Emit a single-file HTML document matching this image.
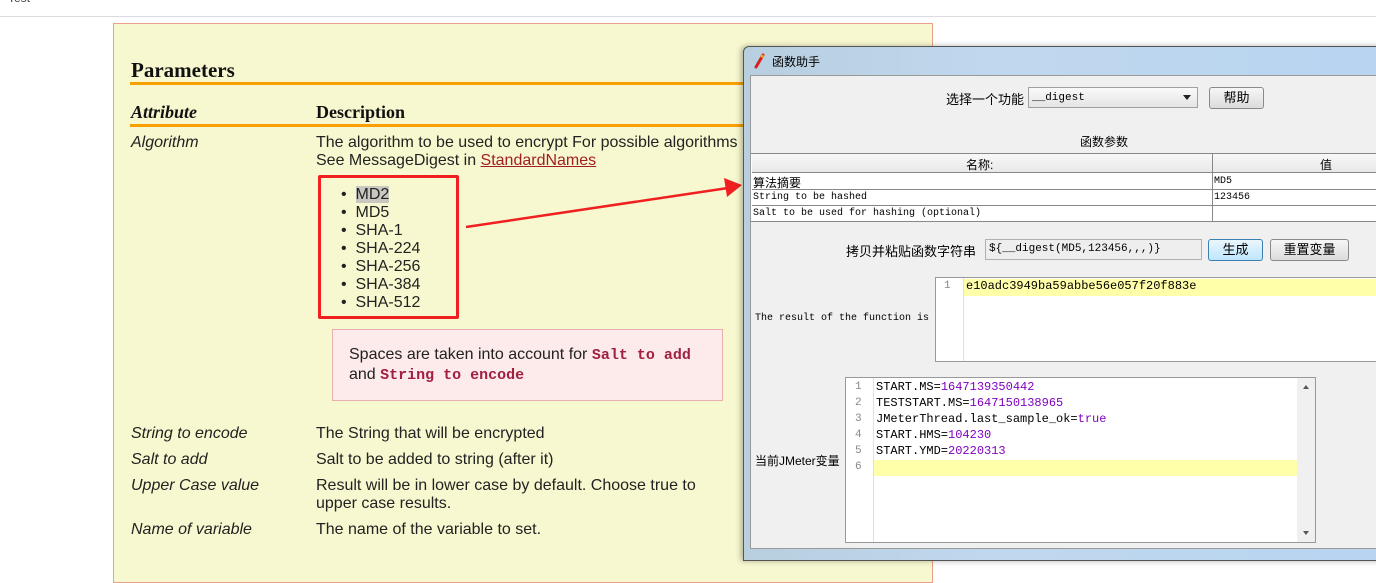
<!DOCTYPE html>
<html><head><meta charset="utf-8"><style>
*{margin:0;padding:0;box-sizing:border-box}
body{width:1376px;height:555px;overflow:hidden;background:#fff;position:relative;font-family:"Liberation Sans","Noto Sans CJK SC",sans-serif}
.a{position:absolute;white-space:nowrap}
.s{font-family:"Liberation Sans",sans-serif;font-size:16px;color:#222}
.i{font-style:italic}
.cjk{font-family:"Liberation Sans","Noto Sans CJK SC",sans-serif;font-size:12px;color:#000}
.mono{font-family:"Liberation Mono","Noto Sans CJK SC",monospace;font-size:11px;color:#000}
.sm{font-family:"Liberation Mono",monospace;font-size:10px;color:#000}
.btn{position:absolute;border:1px solid #8a8a8a;border-radius:3px;background:linear-gradient(#f6f6f6,#dcdcdc);font-size:13px;text-align:center;font-family:"Liberation Sans","Noto Sans CJK SC",sans-serif}
.num{color:#8000c0}
</style></head><body>
<div class="a" style="left:8px;top:-9px;font-size:12px;color:#444">Test</div>
<div class="a" style="left:0;top:16px;width:1376px;height:1px;background:#dcdce0"></div>
<div class="a" style="left:113px;top:23px;width:820px;height:560px;background:#f8f8d0;border:1px solid #e8a088"></div>
<div class="a" style="left:131px;top:58px;font-family:'Liberation Serif',serif;font-weight:bold;font-size:21px;color:#111">Parameters</div>
<div class="a" style="left:130px;top:82px;width:620px;height:3px;background:#f8a000"></div>
<div class="a" style="left:131px;top:102px;font-family:'Liberation Serif',serif;font-weight:bold;font-style:italic;font-size:18px;color:#111">Attribute</div>
<div class="a" style="left:316px;top:102px;font-family:'Liberation Serif',serif;font-weight:bold;font-size:18px;color:#111">Description</div>
<div class="a" style="left:130px;top:124px;width:620px;height:3px;background:#f8a000"></div>
<div class="a s i" style="left:131px;top:134px">Algorithm</div>
<div class="a s" style="left:316px;top:134px">The algorithm to be used to encrypt For possible algorithms</div>
<div class="a s" style="left:316px;top:152px">See MessageDigest in <span style="color:#a02020;text-decoration:underline">StandardNames</span></div>
<div class="a" style="left:318px;top:175px;width:141px;height:144px;border:3px solid #f02020;border-radius:2px"></div>
<div class="a s" style="left:341px;top:186px;line-height:18px">
• &nbsp;<span style="background:#c8c8c0">MD2</span><br>• &nbsp;MD5<br>• &nbsp;SHA-1<br>• &nbsp;SHA-224<br>• &nbsp;SHA-256<br>• &nbsp;SHA-384<br>• &nbsp;SHA-512</div>
<div class="a" style="left:332px;top:329px;width:391px;height:72px;background:#fdeaea;border:1px solid #e8b0b0"></div>
<div class="a s" style="left:349px;top:346px">Spaces are taken into account for <span style="font-family:'Liberation Mono',monospace;font-weight:bold;color:#a02040;font-size:15px">Salt to add</span></div>
<div class="a s" style="left:349px;top:366px">and <span style="font-family:'Liberation Mono',monospace;font-weight:bold;color:#a02040;font-size:15px">String to encode</span></div>
<div class="a s i" style="left:131px;top:425px">String to encode</div>
<div class="a s" style="left:316px;top:425px">The String that will be encrypted</div>
<div class="a s i" style="left:131px;top:451px">Salt to add</div>
<div class="a s" style="left:316px;top:451px">Salt to be added to string (after it)</div>
<div class="a s i" style="left:131px;top:477px">Upper Case value</div>
<div class="a s" style="left:316px;top:477px">Result will be in lower case by default. Choose true to</div>
<div class="a s" style="left:316px;top:495px">upper case results.</div>
<div class="a s i" style="left:131px;top:521px">Name of variable</div>
<div class="a s" style="left:316px;top:521px">The name of the variable to set.</div>
<svg class="a" style="left:0;top:0" width="1376" height="555"><line x1="466" y1="227" x2="728" y2="188" stroke="#f02020" stroke-width="2.5"/><polygon points="742,185 724,178 727,197" fill="#f02020"/></svg>

<div class="a" style="left:743px;top:46px;width:640px;height:515px;background:linear-gradient(90deg,#b8cfe0,#c0d8ee 40%,#b8d4f0);border:1px solid #555;border-radius:6px 0 0 0;box-shadow:-2px 0 6px rgba(0,0,0,.3)"></div>
<svg class="a" style="left:752px;top:53px" width="14" height="18"><path d="M11 2 L4 14" stroke="#d82020" stroke-width="3" stroke-linecap="round"/><path d="M11 2 L9.5 4.5" stroke="#f0a020" stroke-width="3"/></svg>
<div class="a cjk" style="left:772px;top:53px">函数助手</div>
<div class="a" style="left:750px;top:75px;width:630px;height:474px;background:#f0f0f0;border:1px solid #9a9a9a"></div>
<div class="a cjk" style="left:946px;top:89px;font-size:13px">选择一个功能</div>
<div class="a" style="left:1028px;top:87px;width:170px;height:21px;border:1px solid #a0a0a0;background:linear-gradient(#fafafa,#e4e4e4)"></div>
<div class="a mono" style="left:1032px;top:92px">__digest</div>
<div class="a" style="left:1183px;top:95px;width:0;height:0;border-left:4px solid transparent;border-right:4px solid transparent;border-top:5px solid #222"></div>
<div class="btn" style="left:1209px;top:87px;width:55px;height:22px;line-height:20px">帮助</div>
<div class="a cjk" style="left:1080px;top:133px">函数参数</div>
<div class="a" style="left:751px;top:153px;width:630px;height:69px;background:#fff;border-top:1px solid #888;border-bottom:1px solid #888"></div>
<div class="a" style="left:752px;top:154px;width:630px;height:19px;background:linear-gradient(#f8f8f8,#e8e8e8);border-bottom:1px solid #888"></div>
<div class="a" style="left:1212px;top:154px;width:1px;height:67px;background:#888"></div>
<div class="a" style="left:752px;top:189px;width:630px;height:1px;background:#888"></div>
<div class="a" style="left:752px;top:205px;width:630px;height:1px;background:#888"></div>
<div class="a cjk" style="left:966px;top:156px">名称:</div>
<div class="a cjk" style="left:1320px;top:156px">值</div>
<div class="a cjk" style="left:753px;top:174px">算法摘要</div>
<div class="a sm" style="left:1214px;top:176px">MD5</div>
<div class="a sm" style="left:753px;top:192px">String to be hashed</div>
<div class="a sm" style="left:1214px;top:192px">123456</div>
<div class="a sm" style="left:753px;top:208px">Salt to be used for hashing (optional)</div>
<div class="a cjk" style="left:846px;top:241px;font-size:13px">拷贝并粘贴函数字符串</div>
<div class="a" style="left:985px;top:239px;width:217px;height:21px;border:1px solid #b0b0b0;background:#eeeeee"></div>
<div class="a mono" style="left:989px;top:243px">${__digest(MD5,123456,,,)}</div>
<div class="btn" style="left:1208px;top:239px;width:55px;height:22px;line-height:20px;border-color:#3c7fb1;background:linear-gradient(#eaf6fd,#bee6fd)">生成</div>
<div class="btn" style="left:1270px;top:239px;width:79px;height:22px;line-height:20px">重置变量</div>
<div class="a sm" style="left:755px;top:313px">The result of the function is</div>
<div class="a" style="left:935px;top:277px;width:450px;height:85px;background:#fff;border:1px solid #999"></div>
<div class="a" style="left:963px;top:278px;width:1px;height:83px;background:#e0e0e0"></div>
<div class="a" style="left:964px;top:279px;width:420px;height:17px;background:#ffffaa"></div>
<div class="a mono" style="left:944px;top:280px;color:#888">1</div>
<div class="a mono" style="left:966px;top:279px;font-size:12px">e10adc3949ba59abbe56e057f20f883e</div>
<div class="a cjk" style="left:755px;top:452px">当前JMeter变量</div>
<div class="a" style="left:845px;top:377px;width:471px;height:166px;background:#fff;border:1px solid #999"></div>
<div class="a" style="left:873px;top:378px;width:1px;height:164px;background:#e0e0e0"></div>
<div class="a" style="left:1297px;top:378px;width:18px;height:164px;background:#f0f0f0"></div>
<div class="a" style="left:1303px;top:385px;border-left:3px solid transparent;border-right:3px solid transparent;border-bottom:4px solid #555"></div>
<div class="a" style="left:1303px;top:531px;border-left:3px solid transparent;border-right:3px solid transparent;border-top:4px solid #555"></div>
<div class="a" style="left:874px;top:460px;width:423px;height:16px;background:#ffffaa"></div>
<div class="a mono" style="left:855px;top:379px;line-height:16px;color:#888">1<br>2<br>3<br>4<br>5<br>6</div>
<div class="a mono" style="left:876px;top:379px;line-height:16px;font-size:12px">START.MS=<span class="num">1647139350442</span><br>TESTSTART.MS=<span class="num">1647150138965</span><br>JMeterThread.last_sample_ok=<span class="num">true</span><br>START.HMS=<span class="num">104230</span><br>START.YMD=<span class="num">20220313</span></div>
</body></html>
